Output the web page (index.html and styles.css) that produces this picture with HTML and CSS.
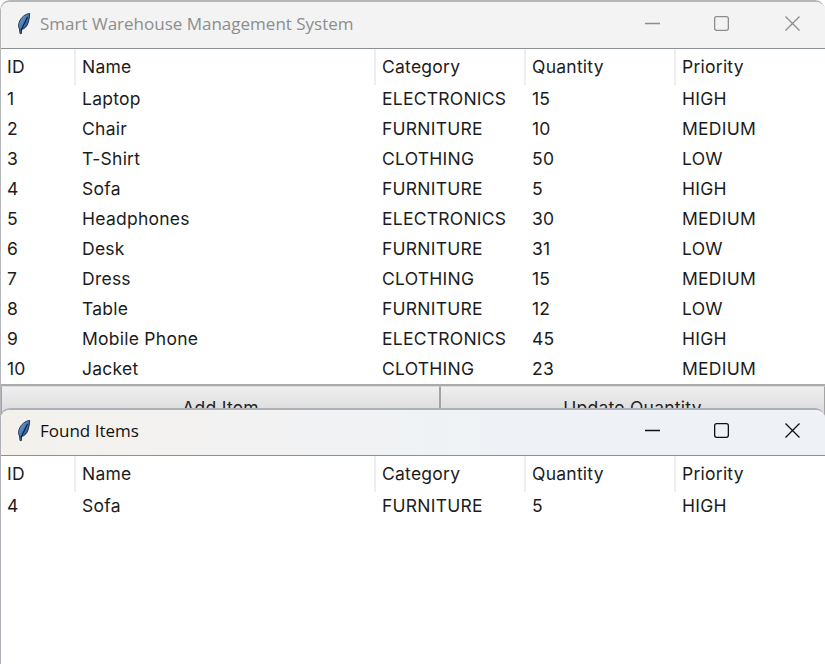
FILE: index.html
```html
<!DOCTYPE html>
<html lang="en">
<head>
<meta charset="utf-8">
<title>Smart Warehouse Management System</title>
<link rel="stylesheet" href="styles.css">
</head>
<body>
<svg class="defs" width="0" height="0" aria-hidden="true">
  <defs>
    <linearGradient id="fg" x1="0" y1="0" x2="1" y2="1">
      <stop offset="0" stop-color="#6fb2ee"/>
      <stop offset="1" stop-color="#123a78"/>
    </linearGradient>
    <symbol id="feather" viewBox="0 0 16 24">
      <path d="M14.500 0.500C9.500 1 4.500 5 2.500 10.500C1.500 13.500 1.500 16 2.800 18.200L3.500 23.500L5 23.500L5.300 18.800C9 18 11.500 15 12.800 11C13.800 7.500 14.500 4 14.500 0.500Z" fill="url(#fg)" stroke="#1b2433" stroke-width="1"/>
      <path d="M12 4.500L4.500 20" stroke="#0c1626" stroke-width="1.200" fill="none"/>
    </symbol>
  </defs>
</svg>
<div class="desktop">
  <section class="window main">
    <header class="titlebar inactive">
      <svg class="logo" width="14" height="23"><use href="#feather"/></svg>
      <span class="title">Smart Warehouse Management System</span>
      <div class="controls">
        <svg width="15" height="15" viewBox="0 0 15 15"><path d="M0 7.500H15"/></svg>
        <svg width="15" height="15" viewBox="0 0 15 15"><rect x="0.650" y="0.650" width="13.700" height="13.700" rx="2"/></svg>
        <svg class="close" width="15" height="15" viewBox="0 0 15 15"><path d="M0.500 0.500L14.500 14.500M14.500 0.500L0.500 14.500"/></svg>
      </div>
    </header>
    <div class="table">
      <div class="row head"><span>ID</span><span>Name</span><span>Category</span><span>Quantity</span><span>Priority</span></div>
      <div class="row"><span>1</span><span>Laptop</span><span>ELECTRONICS</span><span>15</span><span>HIGH</span></div>
      <div class="row"><span>2</span><span>Chair</span><span>FURNITURE</span><span>10</span><span>MEDIUM</span></div>
      <div class="row"><span>3</span><span>T-Shirt</span><span>CLOTHING</span><span>50</span><span>LOW</span></div>
      <div class="row"><span>4</span><span>Sofa</span><span>FURNITURE</span><span>5</span><span>HIGH</span></div>
      <div class="row"><span>5</span><span>Headphones</span><span>ELECTRONICS</span><span>30</span><span>MEDIUM</span></div>
      <div class="row"><span>6</span><span>Desk</span><span>FURNITURE</span><span>31</span><span>LOW</span></div>
      <div class="row"><span>7</span><span>Dress</span><span>CLOTHING</span><span>15</span><span>MEDIUM</span></div>
      <div class="row"><span>8</span><span>Table</span><span>FURNITURE</span><span>12</span><span>LOW</span></div>
      <div class="row"><span>9</span><span>Mobile Phone</span><span>ELECTRONICS</span><span>45</span><span>HIGH</span></div>
      <div class="row"><span>10</span><span>Jacket</span><span>CLOTHING</span><span>23</span><span>MEDIUM</span></div>
    </div>
    <div class="actions">
      <button class="btn">Add Item</button>
      <button class="btn">Update Quantity</button>
    </div>
  </section>
  <section class="window found">
    <header class="titlebar active">
      <svg class="logo" width="14" height="23"><use href="#feather"/></svg>
      <span class="title">Found Items</span>
      <div class="controls">
        <svg width="15" height="15" viewBox="0 0 15 15"><path d="M0 7.500H15"/></svg>
        <svg width="15" height="15" viewBox="0 0 15 15"><rect x="0.650" y="0.650" width="13.700" height="13.700" rx="2"/></svg>
        <svg class="close" width="15" height="15" viewBox="0 0 15 15"><path d="M0.500 0.500L14.500 14.500M14.500 0.500L0.500 14.500"/></svg>
      </div>
    </header>
    <div class="table">
      <div class="row head"><span>ID</span><span>Name</span><span>Category</span><span>Quantity</span><span>Priority</span></div>
      <div class="row"><span>4</span><span>Sofa</span><span>FURNITURE</span><span>5</span><span>HIGH</span></div>
    </div>
  </section>
</div>
</body>
</html>
```
FILE: styles.css
```css
* { box-sizing: border-box; }
html, body { margin: 0; height: 100%; overflow: hidden; background: #fff; }
.defs { position: absolute; }
.desktop {
  position: relative;
  width: 825px;
  height: 664px;
  overflow: hidden;
  font-family: Inter, "Open Sans", sans-serif;
  font-size: 17.500px;
  letter-spacing: 0.250px;
  color: #1c1c1c;
}
.window {
  position: absolute;
  left: 0;
  width: 825px;
  background: #fff;
  border-radius: 10px 10px 0 0;
  overflow: hidden;
  border-left: 1px solid #b4b6ba;
  border-top: 2px solid #b4b6ba;
}
.main { top: 0; height: 420px; }
.found { top: 408px; height: 256px; border-color: #aeb1b6; }
.titlebar {
  display: flex;
  align-items: center;
  height: 47px;
  padding: 0 0 3px 16px;
  border-bottom: 1px solid #8b8f96;
}
.found .titlebar { height: 46px; padding-bottom: 5px; }
.inactive { background: #f3f3f3; color: #8d8d8d; }
.active { background: linear-gradient(90deg, #f4f1ec 0%, #f2f2f3 35%, #eef2f6 60%, #eef2f6 100%); color: #111; }
.logo { flex: none; }
.title { margin-left: 9px; font-family: "Open Sans", sans-serif; font-size: 17px; letter-spacing: 0; }
.controls {
  margin-left: auto;
  display: flex;
  gap: 54px;
  padding-right: 25px;
}
.controls svg { fill: none; stroke: currentColor; stroke-width: 1.300; display: block; }
.controls .close { margin-left: 2px; }
.table { background: #fff; }
.row {
  display: grid;
  grid-template-columns: 75px 300px 150px 150px 150px;
  height: 30px;
  align-items: center;
}
.row span { padding-left: 6px; white-space: nowrap; line-height: 28px; height: 30px; }
.head { height: 36px; }
.head span { height: 36px; line-height: 35px; border-right: 2px solid #eeeeee; }
.head span:last-child { border-right: 0; }
.main .table { border-bottom: 2px solid #a9abae; height: 337px; }
.actions {
  display: grid;
  grid-template-columns: 439px 1fr;
  height: 40px;
}
.btn {
  font: inherit;
  letter-spacing: inherit;
  color: #222;
  background: linear-gradient(180deg, #efefef, #d2d2d2);
  border: 1px solid #a4a4a4;
  border-top-color: #dcdcdc;
  padding: 3px 0 0;
  height: 40px;
  display: block;
}
```
